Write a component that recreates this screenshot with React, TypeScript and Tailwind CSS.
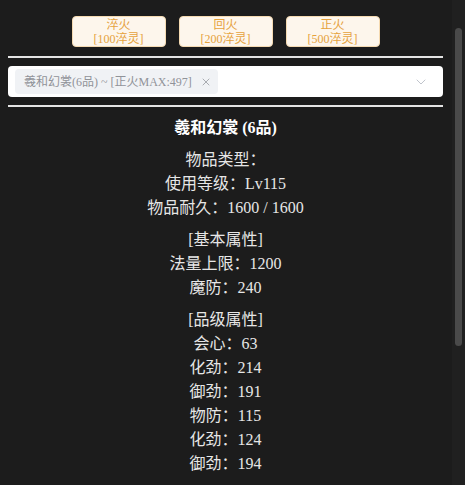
import React from "react";
import { ChevronDown, X } from "lucide-react";

const font = { fontFamily: '"Liberation Serif", "Noto Sans CJK SC", serif' };

const buttons = [
  { name: "淬火", cost: "[100淬灵]" },
  { name: "回火", cost: "[200淬灵]" },
  { name: "正火", cost: "[500淬灵]" },
];

const groups: string[][] = [
  ["物品类型：", "使用等级：Lv115", "物品耐久：1600 / 1600"],
  ["[基本属性]", "法量上限：1200", "魔防：240"],
  ["[品级属性]", "会心：63", "化劲：214", "御劲：191", "物防：115", "化劲：124", "御劲：194"],
];

export default function App() {
  return (
    <div className="flex h-[485px] w-[465px] overflow-hidden bg-[#1c1c1c]" style={font}>
      <div className="w-[452px] pl-2 pr-[9px] pt-4">
        <div className="flex justify-center gap-[13px]">
          {buttons.map((b) => (
            <button
              key={b.name}
              className="flex h-[31px] w-[94px] flex-col items-center justify-center rounded-[4px] border border-[#f5dab1] bg-[#fdf6ec] text-[12px] leading-[14px] text-[#e6a23c]"
            >
              <span>{b.name}</span>
              <span>{b.cost}</span>
            </button>
          ))}
        </div>

        <div className="mt-[9px] h-[2px] bg-[#e4e4e4]" />

        <div className="mt-2 flex h-[31px] items-center rounded-[4px] bg-white pl-[7px] pr-[14px]">
          <div className="flex h-[25px] items-center gap-2 rounded-[4px] bg-[#f0f2f5] pl-[9px] pr-[6px] text-[12px] text-[#909399]">
            <span>羲和幻裳(6品) ~ [正火MAX:497]</span>
            <X className="h-3 w-3" strokeWidth={1.5} />
          </div>
          <div className="flex-1" />
          <ChevronDown className="h-4 w-4 text-[#c0c4cc]" strokeWidth={1.5} />
        </div>

        <div className="mt-2 h-[2px] bg-[#e4e4e4]" />

        <div className="mt-[9px] flex flex-col items-center text-[16px] leading-[24px] text-[#e6e6e6]">
          <div className="font-bold text-white">羲和幻裳 (6品)</div>
          {groups.map((g, i) => (
            <div key={i} className="mt-2 flex flex-col items-center">
              {g.map((line, j) => (
                <div key={j}>{line}</div>
              ))}
            </div>
          ))}
        </div>
      </div>

      <div className="flex w-[13px] justify-center bg-[#202020] pt-[28px]">
        <div className="h-[318px] w-[7px] rounded-full bg-[#4a4a4a]" />
      </div>
    </div>
  );
}
